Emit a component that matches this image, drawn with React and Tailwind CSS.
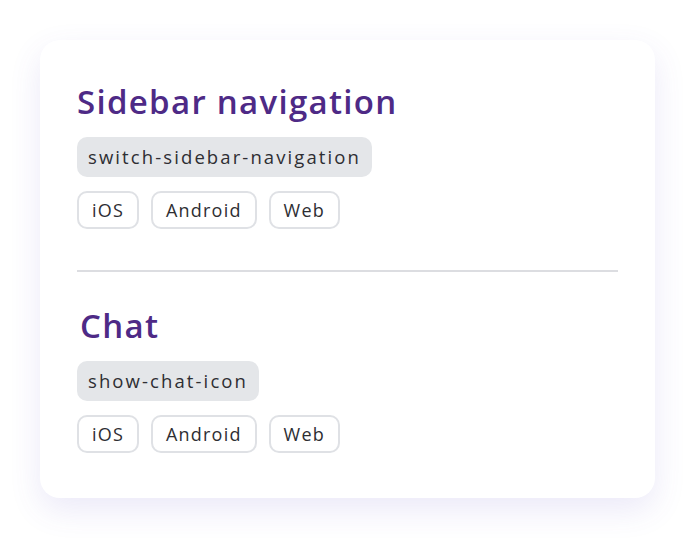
const sections = [
  { title: 'Sidebar navigation', flag: 'switch-sidebar-navigation', indent: '' },
  { title: 'Chat', flag: 'show-chat-icon', indent: 'pl-[3px]' },
];

const platforms = ['iOS', 'Android', 'Web'];

function FlagSection({ title, flag, indent }) {
  return (
    <div>
      <h2 className={`text-[33px] leading-[40px] font-semibold text-[#4e2a86] tracking-[1.3px] ${indent}`}>
        {title}
      </h2>
      <div className="mt-[15px] flex">
        <span className="h-[40px] px-[11px] flex items-center rounded-[10px] bg-[#e4e6e9] text-[18.5px] tracking-[2.1px] text-[#2e2e33]">
          {flag}
        </span>
      </div>
      <div className="mt-[14px] flex gap-[12px]">
        {platforms.map((p) => (
          <span
            key={p}
            className="h-[38px] px-[13px] flex items-center rounded-[10px] border-2 border-[#dfe1e5] text-[18px] tracking-[1.2px] text-[#2e2e33]"
          >
            {p}
          </span>
        ))}
      </div>
    </div>
  );
}

export default function App() {
  return (
    <div className="min-h-[538px] w-[695px] bg-white p-[40px] font-['Open_Sans',sans-serif]">
      <div className="w-[615px] rounded-[20px] bg-white shadow-[0_12px_32px_rgba(90,70,200,0.12)] pl-[37px] pr-[37px] pt-[42px] pb-[45px]">
        <FlagSection {...sections[0]} />
        <div className="mt-[41px] mb-[34px] h-[2px] bg-[#dcdde1]" />
        <FlagSection {...sections[1]} />
      </div>
    </div>
  );
}
